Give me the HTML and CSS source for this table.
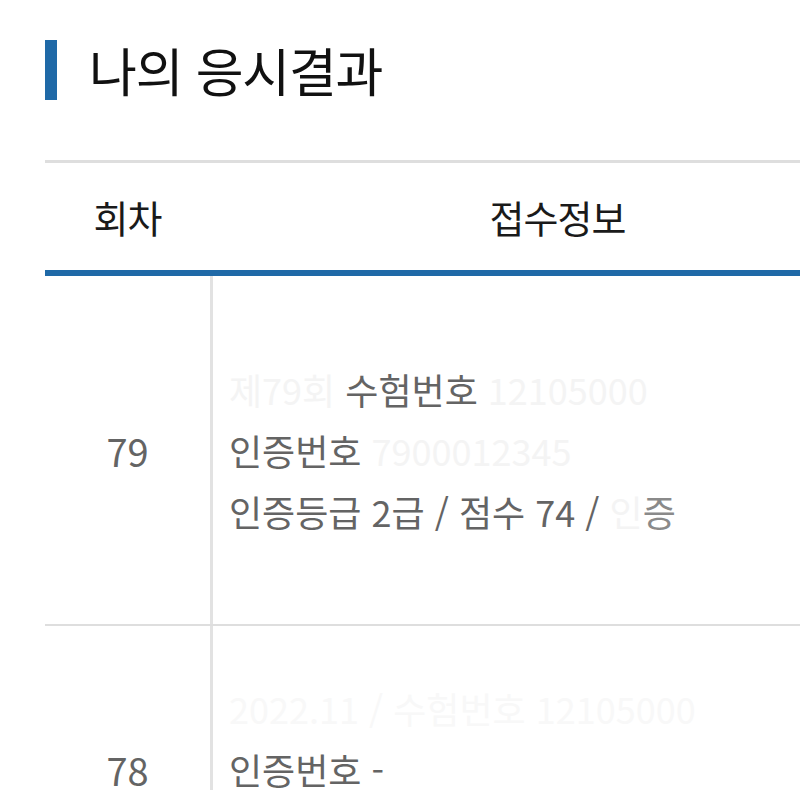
FILE: index.html
```html
<!DOCTYPE html>
<html lang="ko">
<head>
<meta charset="utf-8">
<link rel="stylesheet" href="styles.css">
</head>
<body>
<div class="page">
  <h1 class="title"><span class="bar"></span><span class="title-text">나의 응시결과</span></h1>
  <div class="table">
    <div class="thead">
      <div class="th col-round">회차</div>
      <div class="th col-info">접수정보</div>
    </div>
    <div class="row row-first">
      <div class="td col-round">79</div>
      <div class="td col-info">
        <p class="line"><span class="mask">제79회 </span>수험번호<span class="mask"> 12105000</span></p>
        <p class="line">인증번호 <span class="mask">7900012345</span></p>
        <p class="line">인증등급 2급 / 점수 74 / <span class="mask">인</span><span class="half">증</span></p>
      </div>
    </div>
    <div class="row">
      <div class="td col-round">78</div>
      <div class="td col-info">
        <p class="line faint">2022.11 / 수험번호 12105000</p>
        <p class="line">인증번호 -</p>
        <p class="line">인증등급 - / 점수 52 / 불합격</p>
      </div>
    </div>
  </div>
</div>
</body>
</html>
```

FILE: styles.css
```css
html, body {
  margin: 0;
  padding: 0;
  background: #fff;
  overflow: hidden;
}
body {
  font-family: "Noto Sans CJK KR", "Noto Sans", sans-serif;
}
.page {
  padding: 40px 0 0 45px;
  width: 1100px;
}
.title {
  display: flex;
  align-items: center;
  margin: 0;
  height: 60px;
  font-weight: 400;
}
.bar {
  width: 12px;
  height: 60px;
  background: #1f69a7;
  flex: none;
}
.title-text {
  margin-left: 32px;
  font-size: 52px;
  color: #111;
  letter-spacing: -1.2px;
  line-height: 60px;
}
.table {
  margin-top: 60px;
  border-top: 3px solid #dedede;
}
.thead {
  display: flex;
  height: 107px;
  align-items: center;
  border-bottom: 6px solid #1f69a7;
}
.th {
  font-size: 38px;
  color: #1a1a1a;
  text-align: center;
  font-weight: 400;
  letter-spacing: -1px;
}
.col-round {
  width: 165px;
  flex: none;
  text-align: center;
}
.col-info {
  width: 695px;
  flex: none;
}
.th.col-info {
  text-align: center;
}
.row {
  display: flex;
  border-bottom: 2px solid #dedede;
}
.row-first {
  min-height: 348px;
}
.td {
  display: flex;
  flex-direction: column;
  justify-content: center;
  font-size: 36px;
  color: #646464;
}
.td.col-round {
  align-items: center;
  border-right: 3px solid #e2e2e2;
  font-size: 38px;
}
.td.col-info {
  padding: 52px 0 52px 16px;
}
.line {
  margin: 0;
  line-height: 61px;
  white-space: nowrap;
  letter-spacing: 0;
}
.mask {
  color: #f4f4f4;
}
.half {
  color: #8a8a8a;
}
.faint {
  color: #f8f8f8;
}
```
